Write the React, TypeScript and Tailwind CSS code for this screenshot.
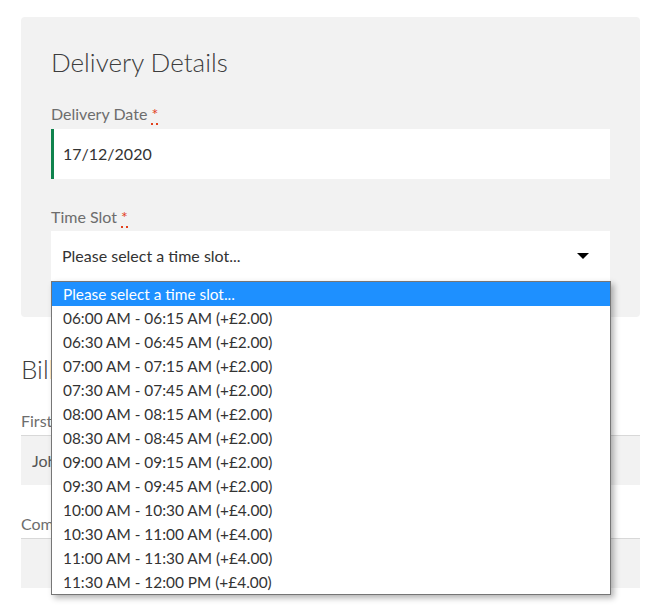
const slots = [
  "06:00 AM - 06:15 AM (+£2.00)",
  "06:30 AM - 06:45 AM (+£2.00)",
  "07:00 AM - 07:15 AM (+£2.00)",
  "07:30 AM - 07:45 AM (+£2.00)",
  "08:00 AM - 08:15 AM (+£2.00)",
  "08:30 AM - 08:45 AM (+£2.00)",
  "09:00 AM - 09:15 AM (+£2.00)",
  "09:30 AM - 09:45 AM (+£2.00)",
  "10:00 AM - 10:30 AM (+£4.00)",
  "10:30 AM - 11:00 AM (+£4.00)",
  "11:00 AM - 11:30 AM (+£4.00)",
  "11:30 AM - 12:00 PM (+£4.00)",
];

function Label({ text, required }: { text: string; required?: boolean }) {
  return (
    <label className="block text-[16px] leading-[24px] text-[#6d6d6d]">
      {text}
      {required && (
        <>
          {" "}
          <abbr
            title="required"
            className="text-[#e2401c] no-underline border-b-2 border-dotted border-[#e2401c]"
          >
            *
          </abbr>
        </>
      )}
    </label>
  );
}

export default function App() {
  return (
    <div
      className="min-h-[614px] bg-white pl-[21px] pr-[24px] pt-[17px] text-[#333]"
      style={{ fontFamily: "Lato, 'Noto Sans', sans-serif" }}
    >
      {/* Delivery details card */}
      <div className="rounded-[4px] bg-[#f2f2f2] px-[30px] pt-[27px] pb-[36px]">
        <h3 className="text-[26px] font-light leading-[36px] text-[#3d3d3d] mb-[22px]">
          Delivery Details
        </h3>

        <Label text="Delivery Date" required />
        <div className="mt-[3px] h-[50px] bg-white border-l-[3px] border-[#0f834d] flex items-center pl-[9px] text-[16px] text-[#333]">
          17/12/2020
        </div>

        <div className="mt-[26px]">
          <Label text="Time Slot" required />
        </div>
        <div className="relative mt-[2px]">
          <div className="h-[50px] bg-white flex items-center justify-between pl-[11px] pr-[21px] text-[16px] text-[#333]">
            <span>Please select a time slot...</span>
            <span className="w-0 h-0 border-l-[6px] border-r-[6px] border-t-[6px] border-l-transparent border-r-transparent border-t-black" />
          </div>

          {/* open dropdown */}
          <ul className="absolute left-0 top-[50px] w-[560px] z-10 bg-white border border-[#767676] shadow-[3px_3px_6px_rgba(0,0,0,0.3)] text-[15.4px] leading-[24px]">
            <li className="bg-[#1e90ff] text-white pl-[11px]">Please select a time slot...</li>
            {slots.map((s) => (
              <li key={s} className="pl-[11px] text-[#333]">
                {s}
              </li>
            ))}
          </ul>
        </div>
      </div>

      {/* Billing details (mostly covered) */}
      <h3 className="mt-[34px] text-[26px] font-light leading-[36px] text-[#3d3d3d]">
        Billing Details
      </h3>
      <div className="mt-[22px]">
        <Label text="First name" required />
        <div className="mt-[2px] h-[50px] bg-[#f2f2f2] border-t border-[#d8d8d8] flex items-center pl-[11px] text-[16px] text-[#555]">
          John
        </div>
      </div>
      <div className="mt-[27px]">
        <Label text="Company name (optional)" />
        <div className="mt-[2px] h-[50px] bg-[#f2f2f2] border-t border-[#d8d8d8]" />
      </div>
    </div>
  );
}
